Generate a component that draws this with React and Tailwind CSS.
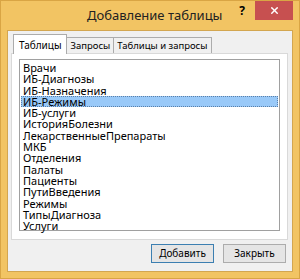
import { X } from 'lucide-react'

const TABLES = [
  'Врачи',
  'ИБ-Диагнозы',
  'ИБ-Назначения',
  'ИБ-Режимы',
  'ИБ-услуги',
  'ИсторияБолезни',
  'ЛекарственныеПрепараты',
  'МКБ',
  'Отделения',
  'Палаты',
  'Пациенты',
  'ПутиВведения',
  'Режимы',
  'ТипыДиагноза',
  'Услуги',
]

const SELECTED = 'ИБ-Режимы'

function Tab({ label, active }) {
  if (active) {
    return (
      <div className="relative z-10 -mb-px h-[20px] whitespace-nowrap border border-b-0 border-[#acacac] bg-white px-[5px] pt-[3px] text-[10px] leading-[14px]">
        {label}
      </div>
    )
  }
  return (
    <div className="mt-[3px] h-[16px] whitespace-nowrap border border-b-0 border-l-0 border-[#acacac] bg-[#f0f0f0] px-[3px] pt-px text-[9.5px] leading-[13px]">
      {label}
    </div>
  )
}

function DialogButton({ children, primary }) {
  return (
    <button
      type="button"
      className={[
        'h-[19px] w-[63px] border bg-[#e5e5e5] text-[10px] leading-[15px] text-black',
        primary ? 'border-[#3c7fb1]' : 'border-[#acacac]',
      ].join(' ')}
    >
      {children}
    </button>
  )
}

export default function App() {
  return (
    <div
      className="flex h-[279px] w-[300px] flex-col border border-[#d9a544] bg-[#f2c463] text-black"
      style={{ fontFamily: '"Noto Sans", "Open Sans", sans-serif' }}
    >
      {/* title bar */}
      <div className="flex h-[29px] shrink-0 items-start">
        <span className="ml-[86px] mt-[4px] whitespace-nowrap text-[13px] leading-[20px] text-[#222]">Добавление таблицы</span>
        <span className="ml-auto mt-[2px] text-[12px] font-bold leading-[16px]">?</span>
        <div className="ml-[10px] mr-[6px] flex h-[19px] w-[38px] items-center justify-center bg-[#c75050]">
          <X className="h-[11px] w-[11px] text-white" strokeWidth={3} />
        </div>
      </div>

      {/* client area */}
      <div className="mx-[6px] mb-[6px] flex flex-1 flex-col border border-[#d3a650] bg-[#f0f0f0] px-[3px] pt-[3px]">
        <div className="flex items-end pl-[2px]">
          <Tab label="Таблицы" active />
          <Tab label="Запросы" />
          <Tab label="Таблицы и запросы" />
        </div>

        <div className="mr-[1px] border border-[#d9d9d9] bg-white px-[7px] pb-[8px] pt-[5px]">
          <div className="h-[172px] border border-[#a0a0a0] bg-white px-px pt-[2px]">
            {TABLES.map((name) => (
              <div
                key={name}
                className={[
                  'h-[11.3px] whitespace-nowrap pl-[2px] text-[11px] leading-[11.3px]',
                  name === SELECTED ? 'outline outline-1 -outline-offset-1 outline-dotted outline-[#5a7fa8] bg-[#99c9f8]' : '',
                ].join(' ')}
              >
                {name}
              </div>
            ))}
          </div>
        </div>

        <div className="mt-auto mb-[8px] flex justify-end gap-[9px] pr-[3px]">
          <DialogButton primary>Добавить</DialogButton>
          <DialogButton>Закрыть</DialogButton>
        </div>
      </div>
    </div>
  )
}
